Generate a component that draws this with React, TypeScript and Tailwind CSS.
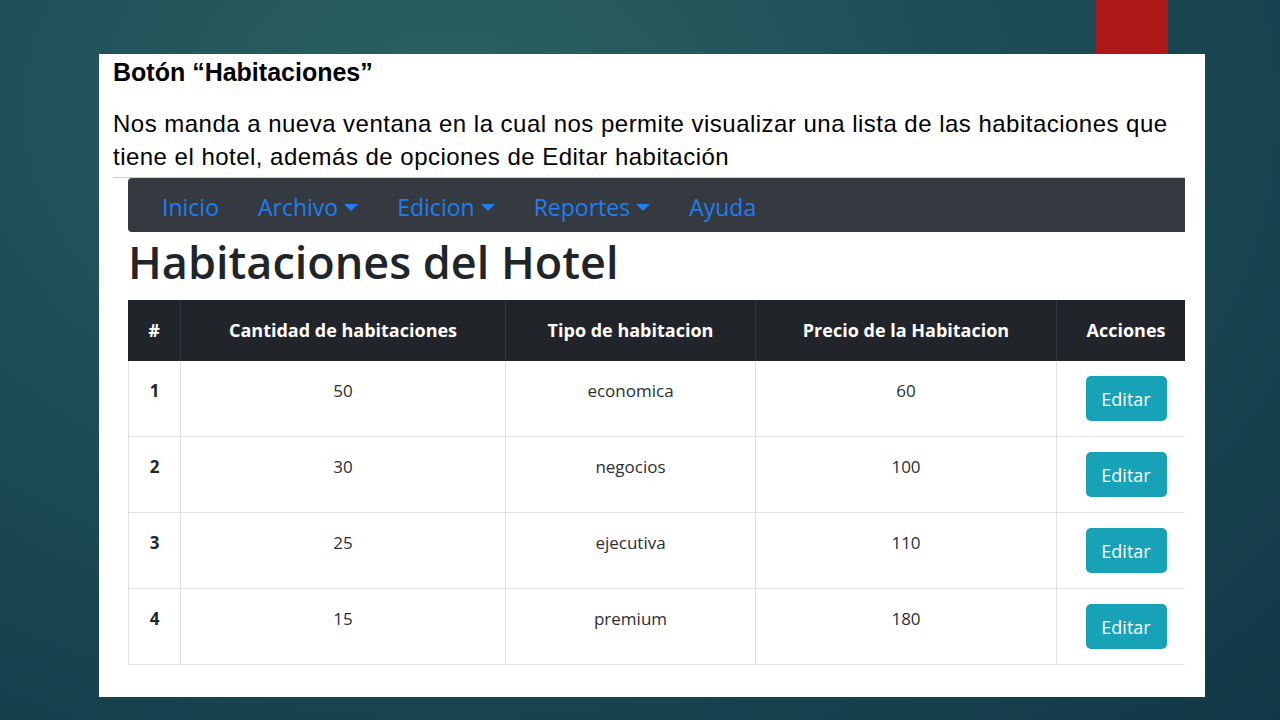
const NAV = [
  { label: 'Inicio', caret: false },
  { label: 'Archivo', caret: true },
  { label: 'Edicion', caret: true },
  { label: 'Reportes', caret: true },
  { label: 'Ayuda', caret: false },
]

const HEADERS = ['#', 'Cantidad de habitaciones', 'Tipo de habitacion', 'Precio de la Habitacion', 'Acciones']

const ROOMS = [
  { id: 1, cantidad: 50, tipo: 'economica', precio: 60 },
  { id: 2, cantidad: 30, tipo: 'negocios', precio: 100 },
  { id: 3, cantidad: 25, tipo: 'ejecutiva', precio: 110 },
  { id: 4, cantidad: 15, tipo: 'premium', precio: 180 },
]

const COLS = 'grid grid-cols-[52px_325px_250px_301px_139px]'

export default function App() {
  return (
    <div className="w-[1280px] h-[720px] overflow-hidden bg-[radial-gradient(ellipse_at_35%_15%,#2b6262_0%,#1d4d57_45%,#123746_100%)] font-['Liberation_Sans',Arial,sans-serif]">
      {/* red accent at the top */}
      <div className="h-[54px] flex">
        <div className="ml-[1096px] w-[72px] h-full bg-[#ad1717]" />
      </div>

      <div className="ml-[99px] w-[1106px] h-[643px] bg-white pt-[4px] pl-[14px]">
        <h2 className="text-[25px] leading-[28px] font-bold text-black">Botón “Habitaciones”</h2>
        <p className="mt-[21px] text-[24px] leading-[33px] tracking-[0.48px] text-black whitespace-nowrap">
          Nos manda a nueva ventana en la cual nos permite visualizar una lista de las habitaciones que
          <br />
          tiene el hotel, además de opciones de Editar habitación
        </p>

        {/* captured web page */}
        <div className="mt-[4px] w-[1072px] border-t border-[#cccccc] pl-[15px] font-['Open_Sans',sans-serif]">
          <nav className="h-[54px] w-[1057px] bg-[#343a40] rounded-l-[4px] flex items-center pt-[3px] pl-[34px] gap-[39px]">
            {NAV.map((item) => (
              <span key={item.label} className="flex items-center text-[23px] leading-[30px] text-[#1f7ef2]">
                {item.label}
                {item.caret && (
                  <span className="ml-[6px] mt-[1px] inline-block w-0 h-0 border-x-[7px] border-t-[7px] border-x-transparent border-t-[#1f7ef2]" />
                )}
              </span>
            ))}
          </nav>

          <h1 className="mt-[2px] text-[45px] leading-[56px] font-semibold text-[#212529]">Habitaciones del Hotel</h1>

          <div className="mt-[10px] w-[1057px] overflow-hidden">
            <div className="w-[1067px]">
              <div className={`${COLS} h-[61px] bg-[#212529] text-white text-[18px] font-bold`}>
                {HEADERS.map((h, i) => (
                  <div
                    key={h}
                    className={`flex items-center justify-center ${i > 0 ? 'border-l border-[#32383e]' : ''}`}
                  >
                    {h}
                  </div>
                ))}
              </div>

              {ROOMS.map((r) => (
                <div key={r.id} className={`${COLS} h-[76px] border-b border-[#dee2e6] text-[17px] leading-[24px] text-[#2b2f33]`}>
                  <div className="pt-[18px] text-center font-bold text-[#212529] border-l border-[#dee2e6]">{r.id}</div>
                  <div className="pt-[18px] text-center border-l border-[#dee2e6]">{r.cantidad}</div>
                  <div className="pt-[18px] text-center border-l border-[#dee2e6]">{r.tipo}</div>
                  <div className="pt-[18px] text-center border-l border-[#dee2e6]">{r.precio}</div>
                  <div className="pt-[15px] flex justify-center border-l border-[#dee2e6]">
                    <button className="w-[81px] h-[45px] rounded-[5px] bg-[#17a2b8] text-white text-[18px] leading-[24px]">
                      Editar
                    </button>
                  </div>
                </div>
              ))}
            </div>
          </div>
        </div>
      </div>
    </div>
  )
}
